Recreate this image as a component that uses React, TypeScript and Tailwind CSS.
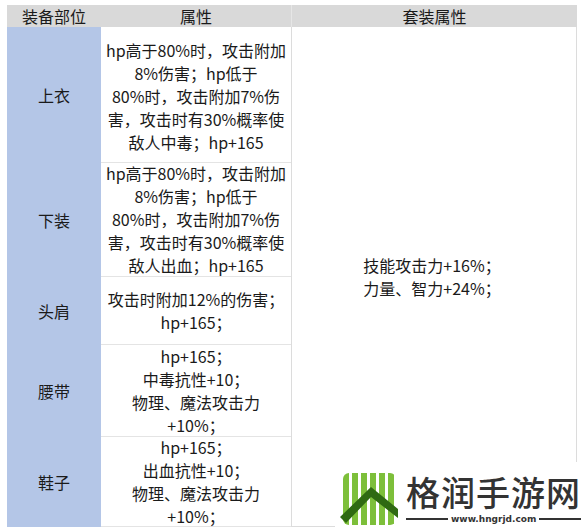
import React from "react";

const font = { fontFamily: '"Noto Sans CJK SC", "Noto Sans", sans-serif' };

const rows = [
  {
    part: "上衣",
    h: "h-[136px]",
    lines: ["hp高于80%时，攻击附加", "8%伤害；hp低于", "80%时，攻击附加7%伤", "害，攻击时有30%概率使", "敌人中毒；hp+165"],
  },
  {
    part: "下装",
    h: "h-[114px]",
    lines: ["hp高于80%时，攻击附加", "8%伤害；hp低于", "80%时，攻击附加7%伤", "害，攻击时有30%概率使", "敌人出血；hp+165"],
  },
  { part: "头肩", h: "h-[68px]", lines: ["攻击时附加12%的伤害；", "hp+165；"] },
  { part: "腰带", h: "h-[92px]", lines: ["hp+165；", "中毒抗性+10；", "物理、魔法攻击力", "+10%；"] },
  { part: "鞋子", h: "h-[90px]", lines: ["hp+165；", "出血抗性+10；", "物理、魔法攻击力", "+10%；"] },
];

function Logo() {
  return (
    <div className="absolute bottom-0 right-0 flex h-[69px] w-[250px] items-end bg-white pb-[4px] pl-[5px]">
      <svg width="58" height="56" viewBox="0 0 58 56">
        <defs>
          <clipPath id="sq">
            <rect x="3" y="2" width="53" height="52" rx="6" />
          </clipPath>
        </defs>
        <g clipPath="url(#sq)">
          {[3, 12, 21, 30, 39, 48].map((x) => (
            <rect key={x} x={x} y="2" width="6" height="52" fill="#7dbf3a" />
          ))}
        </g>
        <path d="M0 46 L31 16 L58 38 L58 47 L31 26 L6 52 Z" fill="#2f6a12" />
      </svg>
      <div className="mb-[3px] ml-[8px] flex flex-col">
        <div className="text-[34px] font-medium leading-[30px] tracking-[1px] text-[#333]" style={font}>
          格润手游网
        </div>
        <div className="mt-[7px] flex items-center gap-[3px]">
          <div className="h-[2px] w-[42px] bg-[#333]" />
          <span className="text-[9px] font-bold leading-[10px] text-[#333]" style={{ fontFamily: '"DejaVu Sans", sans-serif' }}>
            www.hngrjd.com
          </span>
          <div className="h-[2px] w-[42px] bg-[#333]" />
        </div>
      </div>
    </div>
  );
}

export default function App() {
  return (
    <div className="relative h-[531px] w-[585px] overflow-hidden bg-white pl-[7px] pt-[5px] text-[#1a1a1a]" style={font}>
      <div className="grid w-[570px] grid-cols-[94px_191px_285px]">
        <div className="flex h-[22px] items-center justify-center bg-[#d9d9d9] text-[16px]">装备部位</div>
        <div className="flex h-[22px] items-center justify-center border-r border-[#e6e6e6] bg-[#d9d9d9] text-[16px]">属性</div>
        <div className="flex h-[22px] items-center justify-center bg-[#d9d9d9] text-[16px]">套装属性</div>

        <div className="col-start-1 row-start-2 row-end-7 flex flex-col bg-[#b4c6e7]">
          {rows.map((r) => (
            <div key={r.part} className={`${r.h} flex items-center justify-center text-[16px]`}>
              {r.part}
            </div>
          ))}
        </div>
        <div className="col-start-2 row-start-2 row-end-7 flex flex-col border-r border-[#dcdcdc]">
          {rows.map((r, i) => (
            <div
              key={r.part}
              className={`${r.h} flex flex-col items-center justify-center whitespace-nowrap border-b border-[#e4e4e4] text-center text-[16px] leading-[23px] ${i === 0 ? "pt-[3px]" : ""}`}
            >
              {r.lines.map((l, j) => (
                <div key={j}>{l}</div>
              ))}
            </div>
          ))}
        </div>
        <div className="col-start-3 row-start-2 row-end-7 flex flex-col items-center justify-center border-r border-b border-[#dcdcdc] pr-[4px] text-[16px] leading-[23px]">
          <div>技能攻击力+16%；</div>
          <div>力量、智力+24%；</div>
        </div>
      </div>
      <Logo />
    </div>
  );
}
